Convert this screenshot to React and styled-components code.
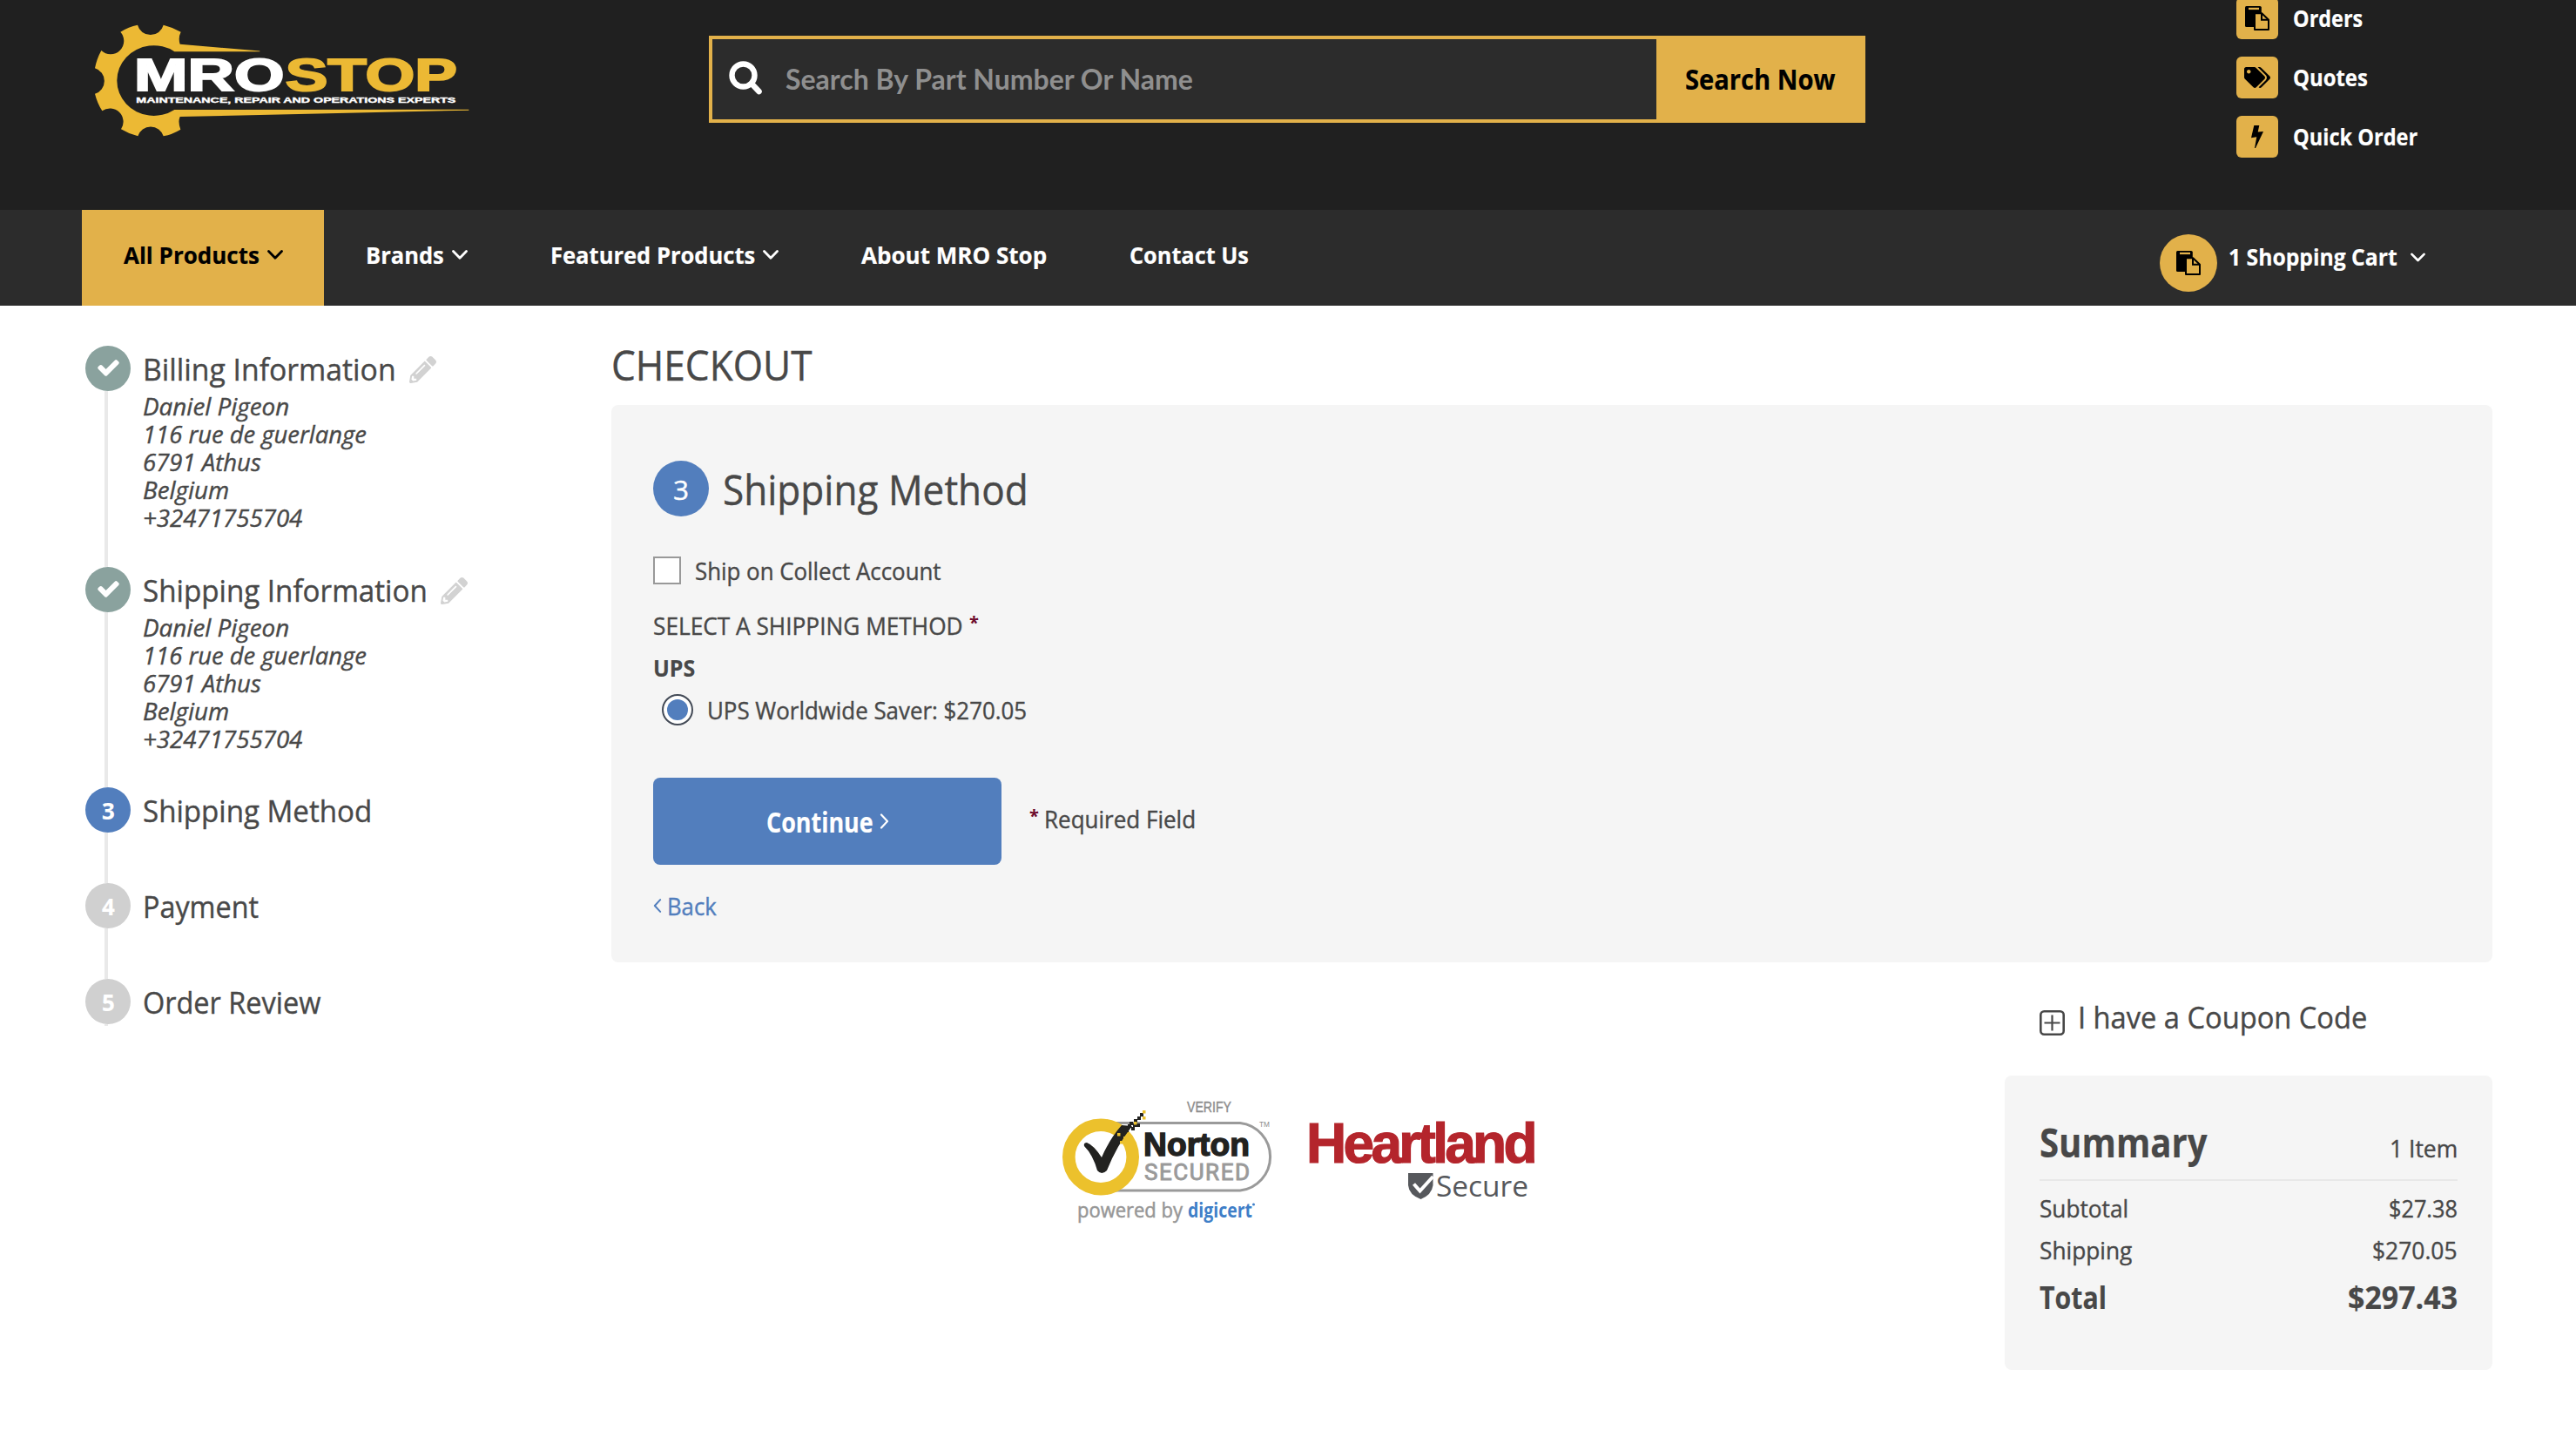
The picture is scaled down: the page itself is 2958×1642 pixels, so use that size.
import React, { useLayoutEffect, useRef, useState } from "react";
import styled, { createGlobalStyle, css } from "styled-components";
import { FaCheck, FaPencilAlt, FaTags } from "react-icons/fa";

const gold = "#e2b14a";
const ink = "#484848";
const blue = "#527ebd";

const GlobalStyle = createGlobalStyle`
  * { box-sizing: border-box; }
  body { margin: 0; background: #fff; overflow: hidden; }
  body, button, input { font-family: "Open Sans", "Noto Sans", sans-serif; }
  svg { display: block; flex: none; }
  h1, h2, h3, p, ul, ol, address { margin: 0; padding: 0; font-weight: 400; font-style: normal; list-style: none; }
`;

/* Text squeezed horizontally to a given advance width */
const sizes = { sm: 27.5, md: 31.5, lg: 35, xl: 47 };
const lines = { sm: 36, md: 44, lg: 44, xl: 60 };
const FitBox = styled.span`
  display: inline-block;
  flex: none;
  width: ${(p) => p.$w}px;
  font-size: ${(p) => sizes[p.$size]}px;
  line-height: ${(p) => p.$lh || lines[p.$size]}px;
  font-weight: ${(p) => (p.$bold ? 700 : 400)};
  -webkit-text-stroke: ${(p) => (p.$bold ? 0.2 : 0.4)}px currentColor;
  white-space: nowrap;
`;
const FitInner = styled.span`
  display: inline-block;
  transform-origin: 0 50%;
`;

function Fit({ w, size = "sm", lh, bold, children }) {
  const ref = useRef(null);
  const [scale, setScale] = useState(1);
  useLayoutEffect(() => {
    setScale(w / ref.current.offsetWidth);
  }, [w]);
  return (
    <FitBox $w={w} $size={size} $lh={lh} $bold={bold}>
      <FitInner ref={ref} style={{ transform: `scaleX(${scale})` }}>{children}</FitInner>
    </FitBox>
  );
}

/* ---------- header ---------- */
const Header = styled.header`
  display: flex;
  align-items: flex-start;
  height: 241px;
  padding-left: 108px;
  background: #202020;
  color: #fff;
`;
const LogoLink = styled.a`
  margin-top: 26px;
`;
const SearchForm = styled.div`
  display: flex;
  width: 1328px;
  height: 100px;
  margin: 41px 0 0 274px;
  border: 4px solid ${gold};
  background: #2c2c2c;
`;
const SearchField = styled.div`
  display: flex;
  flex: 1;
  align-items: center;
  padding: 0 0 5px 18px;
  gap: 26px;
  color: #8f8f8f;
  font: 700 32px/40px Lato, sans-serif;
`;
const Placeholder = styled.span`
  margin-top: 5px;
  white-space: nowrap;
`;
const SearchButton = styled.div`
  display: flex;
  align-items: center;
  justify-content: center;
  width: 236px;
  padding: 0 0 0 2px;
  background: ${gold};
  color: #000;
`;
const QuickLinks = styled.ul`
  display: flex;
  flex-direction: column;
  gap: 20px;
  margin: -3px 0 0 426px;
`;
const QuickLink = styled.li`
  display: flex;
  align-items: center;
  gap: 17px;
  height: 48px;
`;
const QuickIcon = styled.span`
  display: flex;
  align-items: center;
  justify-content: center;
  width: 48px;
  height: 48px;
  border-radius: 6px;
  background: ${gold};
  color: #000;
`;

/* ---------- nav ---------- */
const Nav = styled.nav`
  display: flex;
  height: 110px;
  padding: 0 173px 0 94px;
  background: #2c2c2c;
  color: #fff;
`;
const NavItem = styled.div`
  display: flex;
  align-items: center;
  gap: 9px;
  padding: 0 47px 7px 48px;
  ${(p) => p.$active && css`
    background: ${gold};
    color: #000;
  `}
`;
const Cart = styled.div`
  display: flex;
  align-items: flex-start;
  margin-left: auto;
  padding-top: 28px;
`;
const CartIcon = styled.span`
  display: flex;
  align-items: center;
  justify-content: center;
  width: 66px;
  height: 66px;
  margin-right: 13px;
  border-radius: 50%;
  background: ${gold};
`;
const CartLabel = styled.span`
  display: flex;
  align-items: center;
  gap: 15px;
  padding-top: 8px;
`;

/* ---------- page ---------- */
const Page = styled.main`
  display: flex;
  padding-left: 98px;
  color: ${ink};
  ${FitInner} { translate: 0 1px; }
`;
const Sidebar = styled.ol`
  width: 604px;
  padding-top: 46px;
`;
const Step = styled.li`
  display: flex;
  gap: 14px;
  height: ${(p) => p.$h}px;
`;
const StepTrack = styled.div`
  display: flex;
  flex-direction: column;
  width: 52px;
`;
const Rail = styled.div`
  flex: 1;
  width: 4px;
  margin-left: 22px;
  background: #e9e9e9;
`;
const stepColors = { done: "#8aa29e", current: blue, todo: "#d0d0d0" };
const StepDot = styled.div`
  display: flex;
  align-items: center;
  justify-content: center;
  width: 52px;
  height: 52px;
  padding-bottom: 1px;
  border-radius: 50%;
  background: ${(p) => stepColors[p.$state]};
  color: #fff;
`;
const CheckMark = styled(FaCheck)`
  width: 23px;
  height: 23px;
  stroke: currentColor;
  stroke-width: 34px;
  overflow: visible;
`;
const StepBody = styled.div`
  padding-top: 4px;
`;
const StepTitle = styled.h3`
  display: flex;
  align-items: center;
  gap: 15px;
  color: ${ink};
  svg { color: #d2d2d2; margin-top: 2px; }
`;
const Address = styled.address`
  display: flex;
  flex-direction: column;
  margin-top: 5px;
  font-style: italic;
`;

const Content = styled.section`
  width: 2160px;
`;
const PageTitle = styled.h1`
  display: flex;
  margin: 37px 0 17px;
`;
const Panel = styled.div`
  height: 640px;
  padding: 64px 48px 0;
  border-radius: 8px;
  background: #f5f5f5;
`;
const PanelTitle = styled.h2`
  display: flex;
  gap: 16px;
`;
const PanelDot = styled.span`
  display: flex;
  align-items: center;
  justify-content: center;
  width: 64px;
  height: 64px;
  border-radius: 50%;
  background: ${blue};
  color: #fff;
`;
const CheckRow = styled.label`
  display: flex;
  align-items: center;
  gap: 16px;
  height: 32px;
  margin-top: 46px;
`;
const Checkbox = styled.span`
  width: 32px;
  height: 32px;
  border: 2px solid #999;
  background: #fff;
`;
const FieldLabel = styled.div`
  display: flex;
  gap: 7px;
  margin-top: 29px;
`;
const Carrier = styled.div`
  display: flex;
  margin-top: 12px;
`;
const RadioRow = styled.label`
  display: flex;
  align-items: center;
  gap: 16px;
  height: 36px;
  margin: 13px 0 0 10px;
`;
const Radio = styled.span`
  display: flex;
  align-items: center;
  justify-content: center;
  width: 36px;
  height: 36px;
  border: 2px solid #444b57;
  border-radius: 50%;
  background: #fff;
  &::after {
    content: "";
    width: 24px;
    height: 24px;
    border-radius: 50%;
    background: ${blue};
  }
`;
const Star = styled.span`
  width: 11px;
  font-size: 20px;
  line-height: 30px;
  font-weight: 700;
  color: #6d0a2c;
`;
const Actions = styled.div`
  display: flex;
  align-items: center;
  margin-top: 60px;
`;
const ContinueButton = styled.div`
  display: flex;
  align-items: center;
  justify-content: center;
  gap: 7px;
  width: 400px;
  height: 100px;
  border-radius: 8px;
  background: ${blue};
  color: #fff;
`;
const Required = styled.div`
  display: flex;
  gap: 6px;
  padding: 0 0 6px 32px;
`;
const BackLink = styled.div`
  display: flex;
  align-items: center;
  gap: 6px;
  margin-top: 29px;
  color: ${blue};
`;

const BottomRow = styled.div`
  display: flex;
  align-items: flex-start;
  justify-content: space-between;
`;
const Badges = styled.div`
  display: flex;
  gap: 34px;
  padding: 155px 0 0 516px;
`;
const Aside = styled.aside`
  width: 560px;
`;
const Coupon = styled.div`
  display: flex;
  align-items: flex-end;
  gap: 15px;
  padding: 40px 0 0 40px;
`;
const Summary = styled.div`
  height: 338px;
  margin-top: 46px;
  padding: 45px 40px 0;
  border-radius: 8px;
  background: #f5f5f5;
`;
const SummaryHead = styled.div`
  display: flex;
  align-items: baseline;
  justify-content: space-between;
  height: 76px;
  margin-bottom: 13px;
  border-bottom: 2px solid #e8e8e8;
`;
const SummaryRow = styled.div`
  display: flex;
  justify-content: space-between;
  margin-bottom: ${(p) => p.$gap || 12}px;
`;

/* ---------- drawings ---------- */
const ChevronDown = ({ w = 18 }) => (
  <svg width={w} height="11" viewBox="0 0 18 11" fill="none" stroke="currentColor" strokeWidth="2.8" strokeLinecap="round" strokeLinejoin="round">
    <path d="M1.5 1.6 9 9.2l7.5-7.6" />
  </svg>
);
const ChevronSide = ({ left }) => (
  <svg width={left ? 10 : 11} height="18" viewBox="0 0 11 18" fill="none" stroke="currentColor" strokeWidth="2.2" strokeLinecap="round" strokeLinejoin="round">
    <path d={left ? "M9 1.5 2 9l7 7.5" : "M2 1.5 9 9l-7 7.5"} />
  </svg>
);
const SearchIcon = () => (
  <svg width="40" height="40" viewBox="0 0 40 40" fill="none" stroke="#fff" strokeLinecap="round">
    <circle cx="17.5" cy="17.5" r="13" strokeWidth="6.4" />
    <path d="M27 27l8.5 9" strokeWidth="6.6" />
  </svg>
);
const PasteIcon = () => (
  <svg width="28" height="28" viewBox="0 0 28 28">
    <path d="M1.5 0H17q1.8 0 1.8 1.6V24H1.5Q0 24 0 22.500V1.500Q0 0 1.500 0z" fill="#000" />
    <path d="M4 1.8h12v2.300H4z" fill={gold} />
    <path d="M11 8.200h8.200l7.800 7.600V27H11z" fill={gold} stroke="#000" strokeWidth="2" strokeLinejoin="round" />
    <path d="M19 8.200v7.600h8" fill="none" stroke="#000" strokeWidth="2" />
  </svg>
);
const BoltIcon = () => (
  <svg width="14" height="26" viewBox="0 0 14 26">
    <path d="M3.300 0H9.300L7.700 7.600 14 7 5 26H4L6.300 13.200 0 14.200z" fill="#000" />
  </svg>
);
const PlusBox = () => (
  <svg width="29" height="29" viewBox="0 0 29 29" fill="none" stroke={ink}>
    <rect x="1.300" y="1.300" width="26.400" height="26.400" rx="4" strokeWidth="2.600" />
    <path d="M14.500 5.500v18M5.500 14.500h18" strokeWidth="2.200" />
  </svg>
);

const logoText = { fontFamily: '"Liberation Sans", Arial, sans-serif', fontWeight: 700 };

const MroLogo = () => (
  <svg width="432" height="132" viewBox="84 78 1296 396">
    <path
      fill="#ecb934"
      d="M380 152L655 175.500 655 177.500H361A127 121 0 1 0 361 378L1375 377.500V380L380 402Q372 420 382 446Q354 463 323 469A46 46 0 0 0 235 469Q205 462 177 445A46 46 0 0 0 112 382Q95 355 87 323A46 46 0 0 0 87 235Q93 203 109 174A46 46 0 0 0 175 110Q203 92 234 86A46 46 0 0 0 323 86Q355 94 383 110Q373 130 380 152z"
    />
    <g style={logoText} fontSize="155">
      <text x="222" y="313" fill="#fff" stroke="#fff" strokeWidth="6" textLength="517" lengthAdjust="spacingAndGlyphs">MRO</text>
      <text x="743" y="313" fill="#ecb934" stroke="#ecb934" strokeWidth="6" textLength="592" lengthAdjust="spacingAndGlyphs">STOP</text>
    </g>
    <text x="229" y="355" fill="#fff" stroke="#fff" strokeWidth="1.2" style={logoText} fontSize="29" textLength="1101" lengthAdjust="spacingAndGlyphs">
      MAINTENANCE, REPAIR AND OPERATIONS EXPERTS
    </text>
  </svg>
);

const pixelBlack = [[67, 39], [72, 36], [69, 33], [75, 31], [79, 34], [77, 28], [81, 30], [85, 30], [82, 25], [86, 22], [89, 18]];
const pixelGold = [[63, 41], [70, 45], [66, 50], [82, 28], [92, 15], [92, 22]];

const NortonBadge = () => (
  <svg width="246" height="146" viewBox="0 0 246 146">
    <g transform="translate(2 0)">
      <path d="M60 29.500H204A39 39 0 0 1 204 107H60" fill="#fff" stroke="#9a9a9a" strokeWidth="3" />
      <circle cx="44" cy="68.500" r="36.700" fill="#fff" stroke="#ecc12c" strokeWidth="14.600" />
      <path d="M25 56Q24 52 28 52Q36 55 45 69Q54 48 68 32L80 33Q62 56 51 84Q45 90 40 84Q35 66 25 56z" fill="#222220" />
      {pixelBlack.map(([x, y]) => <rect key={`${x}-${y}`} x={x} y={y} width="4" height="4" fill="#222220" />)}
      {pixelGold.map(([x, y]) => <rect key={`${x}-${y}`} x={x} y={y} width="3.500" height="3.500" fill="#ecc12c" />)}
      <g fontFamily='"Liberation Sans", Arial, sans-serif'>
        <text x="143" y="17" fontSize="16.500" fill="#8c8c8c" stroke="#8c8c8c" strokeWidth=".4" textLength="51" lengthAdjust="spacingAndGlyphs">VERIFY</text>
        <text x="226" y="34" fontSize="8.500" fill="#8c8c8c" textLength="12" lengthAdjust="spacingAndGlyphs">TM</text>
        <text x="93" y="67" fontSize="37.500" fontWeight="700" fill="#222220" stroke="#222220" strokeWidth="1.400" textLength="122" lengthAdjust="spacingAndGlyphs">Norton</text>
      </g>
      <text x="94" y="94.500" fontFamily="Roboto, sans-serif" fontSize="26" fill="#9a9a9a" stroke="#9a9a9a" strokeWidth=".9" textLength="121" lengthAdjust="spacing">SECURED</text>
      <text x="17" y="138" fontFamily='"Open Sans", sans-serif' fontSize="23" fill="#979797" stroke="#979797" strokeWidth=".5" textLength="121" lengthAdjust="spacingAndGlyphs">powered by</text>
      <text x="144" y="138" fontFamily='"Open Sans", sans-serif' fontSize="23" fontWeight="700" fill="#3f7fc8" textLength="74" lengthAdjust="spacingAndGlyphs">digicert</text>
      <circle cx="219.500" cy="123" r="1.500" fill="#3f7fc8" />
    </g>
  </svg>
);

const HeartlandBadge = () => (
  <svg width="276" height="146" viewBox="-4 0 276 146">
    <text x="-2" y="74.500" style={logoText} fontSize="64" fill="#b4252c" stroke="#b4252c" strokeWidth="1.200" letterSpacing="-3.700">Heartland</text>
    <path d="M115 87H143.500V101Q142 112 129.500 117Q116 112 115 101z" fill="#56585c" />
    <path d="M121.500 99.500l7 8L143.500 91" fill="none" stroke="#fff" strokeWidth="4" />
    <text x="147" y="114" fontFamily='"Open Sans", sans-serif' fontSize="33" fill="#56585c" textLength="106" lengthAdjust="spacingAndGlyphs">Secure</text>
  </svg>
);

/* ---------- data ---------- */
const address = [
  ["Daniel Pigeon", 168],
  ["116 rue de guerlange", 257],
  ["6791 Athus", 136],
  ["Belgium", 99],
  ["+32471755704", 183],
];
const steps = [
  { title: "Billing Information", w: 291, h: 254, state: "done", address },
  { title: "Shipping Information", w: 327, h: 253, state: "done", address },
  { title: "Shipping Method", w: 263, h: 110, state: "current" },
  { title: "Payment", w: 133, h: 110, state: "todo" },
  { title: "Order Review", w: 204, h: 54, state: "todo" },
];
const nav = [
  { label: "All Products", w: 156, menu: true, active: true },
  { label: "Brands", w: 90, menu: true },
  { label: "Featured Products", w: 235, menu: true },
  { label: "About MRO Stop", w: 213 },
  { label: "Contact Us", w: 137 },
];
const quick = [
  { label: "Orders", w: 80, icon: <PasteIcon /> },
  { label: "Quotes", w: 86, icon: <FaTags style={{ width: 30, height: 24 }} /> },
  { label: "Quick Order", w: 143, icon: <BoltIcon /> },
];

export default function App() {
  return (
    <>
      <GlobalStyle />
      <Header>
        <LogoLink><MroLogo /></LogoLink>
        <SearchForm>
          <SearchField>
            <SearchIcon />
            <Placeholder>Search By Part Number Or Name</Placeholder>
          </SearchField>
          <SearchButton><Fit w={172} size="md" bold>Search Now</Fit></SearchButton>
        </SearchForm>
        <QuickLinks>
          {quick.map((q) => (
            <QuickLink key={q.label}>
              <QuickIcon>{q.icon}</QuickIcon>
              <Fit w={q.w} bold>{q.label}</Fit>
            </QuickLink>
          ))}
        </QuickLinks>
      </Header>
      <Nav>
        {nav.map((n) => (
          <NavItem key={n.label} $active={n.active}>
            <Fit w={n.w} bold>{n.label}</Fit>
            {n.menu && <ChevronDown />}
          </NavItem>
        ))}
        <Cart>
          <CartIcon><PasteIcon /></CartIcon>
          <CartLabel>
            <Fit w={194} bold>1 Shopping Cart</Fit>
            <ChevronDown w={17} />
          </CartLabel>
        </Cart>
      </Nav>
      <Page>
        <Sidebar>
          {steps.map((s, i) => (
            <Step key={s.title} $h={s.h}>
              <StepTrack>
                <StepDot $state={s.state}>
                  {s.state === "done" ? <CheckMark /> : <Fit w={15} bold>{i + 1}</Fit>}
                </StepDot>
                <Rail />
              </StepTrack>
              <StepBody>
                <StepTitle>
                  <Fit w={s.w} size="lg">{s.title}</Fit>
                  {s.address && <FaPencilAlt size={31} />}
                </StepTitle>
                {s.address && (
                  <Address>
                    {s.address.map(([line, w]) => <Fit key={line} w={w} lh={31.9}>{line}</Fit>)}
                  </Address>
                )}
              </StepBody>
            </Step>
          ))}
        </Sidebar>
        <Content>
          <PageTitle><Fit w={230} size="xl">CHECKOUT</Fit></PageTitle>
          <Panel>
            <PanelTitle>
              <PanelDot><Fit w={18} size="md">3</Fit></PanelDot>
              <Fit w={351} size="xl" lh={64}>Shipping Method</Fit>
            </PanelTitle>
            <CheckRow>
              <Checkbox />
              <Fit w={283} lh={32}>Ship on Collect Account</Fit>
            </CheckRow>
            <FieldLabel>
              <Fit w={356}>SELECT A SHIPPING METHOD</Fit>
              <Star>*</Star>
            </FieldLabel>
            <Carrier><Fit w={48} bold>UPS</Fit></Carrier>
            <RadioRow>
              <Radio />
              <Fit w={367} lh={38}>UPS Worldwide Saver: $270.05</Fit>
            </RadioRow>
            <Actions>
              <ContinueButton>
                <Fit w={123} size="md" bold>Continue</Fit>
                <ChevronSide />
              </ContinueButton>
              <Required>
                <Star>*</Star>
                <Fit w={174}>Required Field</Fit>
              </Required>
            </Actions>
            <BackLink>
              <ChevronSide left />
              <Fit w={57}>Back</Fit>
            </BackLink>
          </Panel>
          <BottomRow>
            <Badges>
              <NortonBadge />
              <HeartlandBadge />
            </Badges>
            <Aside>
              <Coupon>
                <PlusBox />
                <Fit w={332} size="lg">I have a Coupon Code</Fit>
              </Coupon>
              <Summary>
                <SummaryHead>
                  <Fit w={193} size="xl" bold>Summary</Fit>
                  <Fit w={78}>1 Item</Fit>
                </SummaryHead>
                <SummaryRow><Fit w={102}>Subtotal</Fit><Fit w={79}>$27.38</Fit></SummaryRow>
                <SummaryRow $gap={14}><Fit w={106}>Shipping</Fit><Fit w={98}>$270.05</Fit></SummaryRow>
                <SummaryRow><Fit w={77} size="lg" bold>Total</Fit><Fit w={126} size="lg" bold>$297.43</Fit></SummaryRow>
              </Summary>
            </Aside>
          </BottomRow>
        </Content>
      </Page>
    </>
  );
}
